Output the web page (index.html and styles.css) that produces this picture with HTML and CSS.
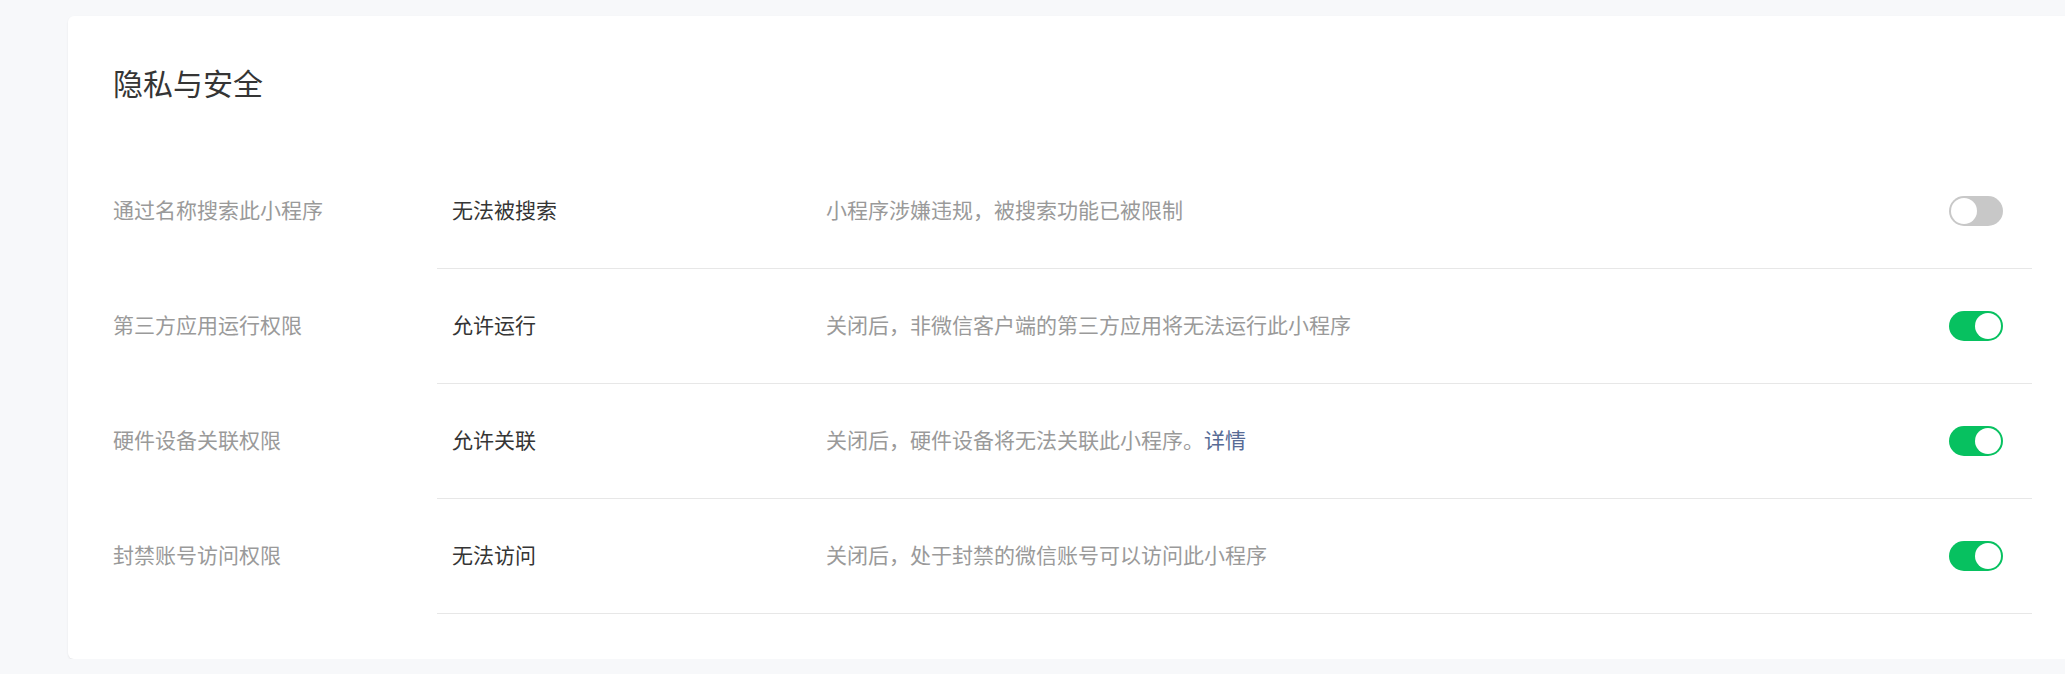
FILE: index.html
```html
<!DOCTYPE html>
<html lang="zh-CN">
<head>
    <meta charset="UTF-8">
    <meta name="viewport" content="width=device-width, initial-scale=1.0">
    <title>隐私与安全</title>
    <link rel="stylesheet" href="styles.css">
</head>
<body>
    <div class="card">
        <h2 class="card-title">隐私与安全</h2>

        <div class="setting-row">
            <div class="setting-label">通过名称搜索此小程序</div>
            <div class="setting-body">
                <div class="setting-value">无法被搜索</div>
                <div class="setting-desc">小程序涉嫌违规，被搜索功能已被限制</div>
                <span class="switch"></span>
            </div>
        </div>

        <div class="setting-row">
            <div class="setting-label">第三方应用运行权限</div>
            <div class="setting-body">
                <div class="setting-value">允许运行</div>
                <div class="setting-desc">关闭后，非微信客户端的第三方应用将无法运行此小程序</div>
                <span class="switch on"></span>
            </div>
        </div>

        <div class="setting-row">
            <div class="setting-label">硬件设备关联权限</div>
            <div class="setting-body">
                <div class="setting-value">允许关联</div>
                <div class="setting-desc">关闭后，硬件设备将无法关联此小程序。<a href="#" class="link">详情</a></div>
                <span class="switch on"></span>
            </div>
        </div>

        <div class="setting-row">
            <div class="setting-label">封禁账号访问权限</div>
            <div class="setting-body">
                <div class="setting-value">无法访问</div>
                <div class="setting-desc">关闭后，处于封禁的微信账号可以访问此小程序</div>
                <span class="switch on"></span>
            </div>
        </div>
    </div>
</body>
</html>
```

FILE: styles.css
```css
body {
    margin: 0;
    padding: 16px 0 0 68px;
    background-color: #f7f8fa;
    font-family: "Microsoft YaHei", "Noto Sans CJK SC", sans-serif;
    overflow: hidden;
}
.card {
    width: 2009px;
    box-sizing: border-box;
    background-color: #fff;
    border-radius: 6px;
    box-shadow: 0 1px 2px rgba(0, 0, 0, 0.08);
    padding: 0 45px 45px;
}
.card-title {
    margin: 0 0 43px;
    padding-top: 37px;
    font-size: 30px;
    line-height: 58px;
    font-weight: normal;
    color: #353535;
}
.setting-row {
    display: flex;
    font-size: 21px;
}
.setting-label {
    width: 324px;
    flex-shrink: 0;
    display: flex;
    align-items: center;
    padding-bottom: 5px;
    color: #9a9a9a;
}
.setting-body {
    flex: 1;
    display: flex;
    align-items: center;
    height: 114px;
    padding: 0 29px 0 15px;
    border-bottom: 1px solid #e7e7e7;
}
.setting-value {
    width: 374px;
    flex-shrink: 0;
    margin-bottom: 5px;
    color: #353535;
}
.setting-desc {
    flex: 1;
    margin-bottom: 5px;
    color: #9a9a9a;
}
.link {
    color: #576b95;
    text-decoration: none;
}
.switch {
    position: relative;
    width: 54px;
    height: 30px;
    border-radius: 15px;
    background-color: #c8c8c8;
    flex-shrink: 0;
}
.switch::after {
    content: "";
    position: absolute;
    top: 2px;
    left: 2px;
    width: 26px;
    height: 26px;
    border-radius: 50%;
    background-color: #fff;
}
.switch.on {
    background-color: #07c160;
}
.switch.on::after {
    left: 26px;
}
```
